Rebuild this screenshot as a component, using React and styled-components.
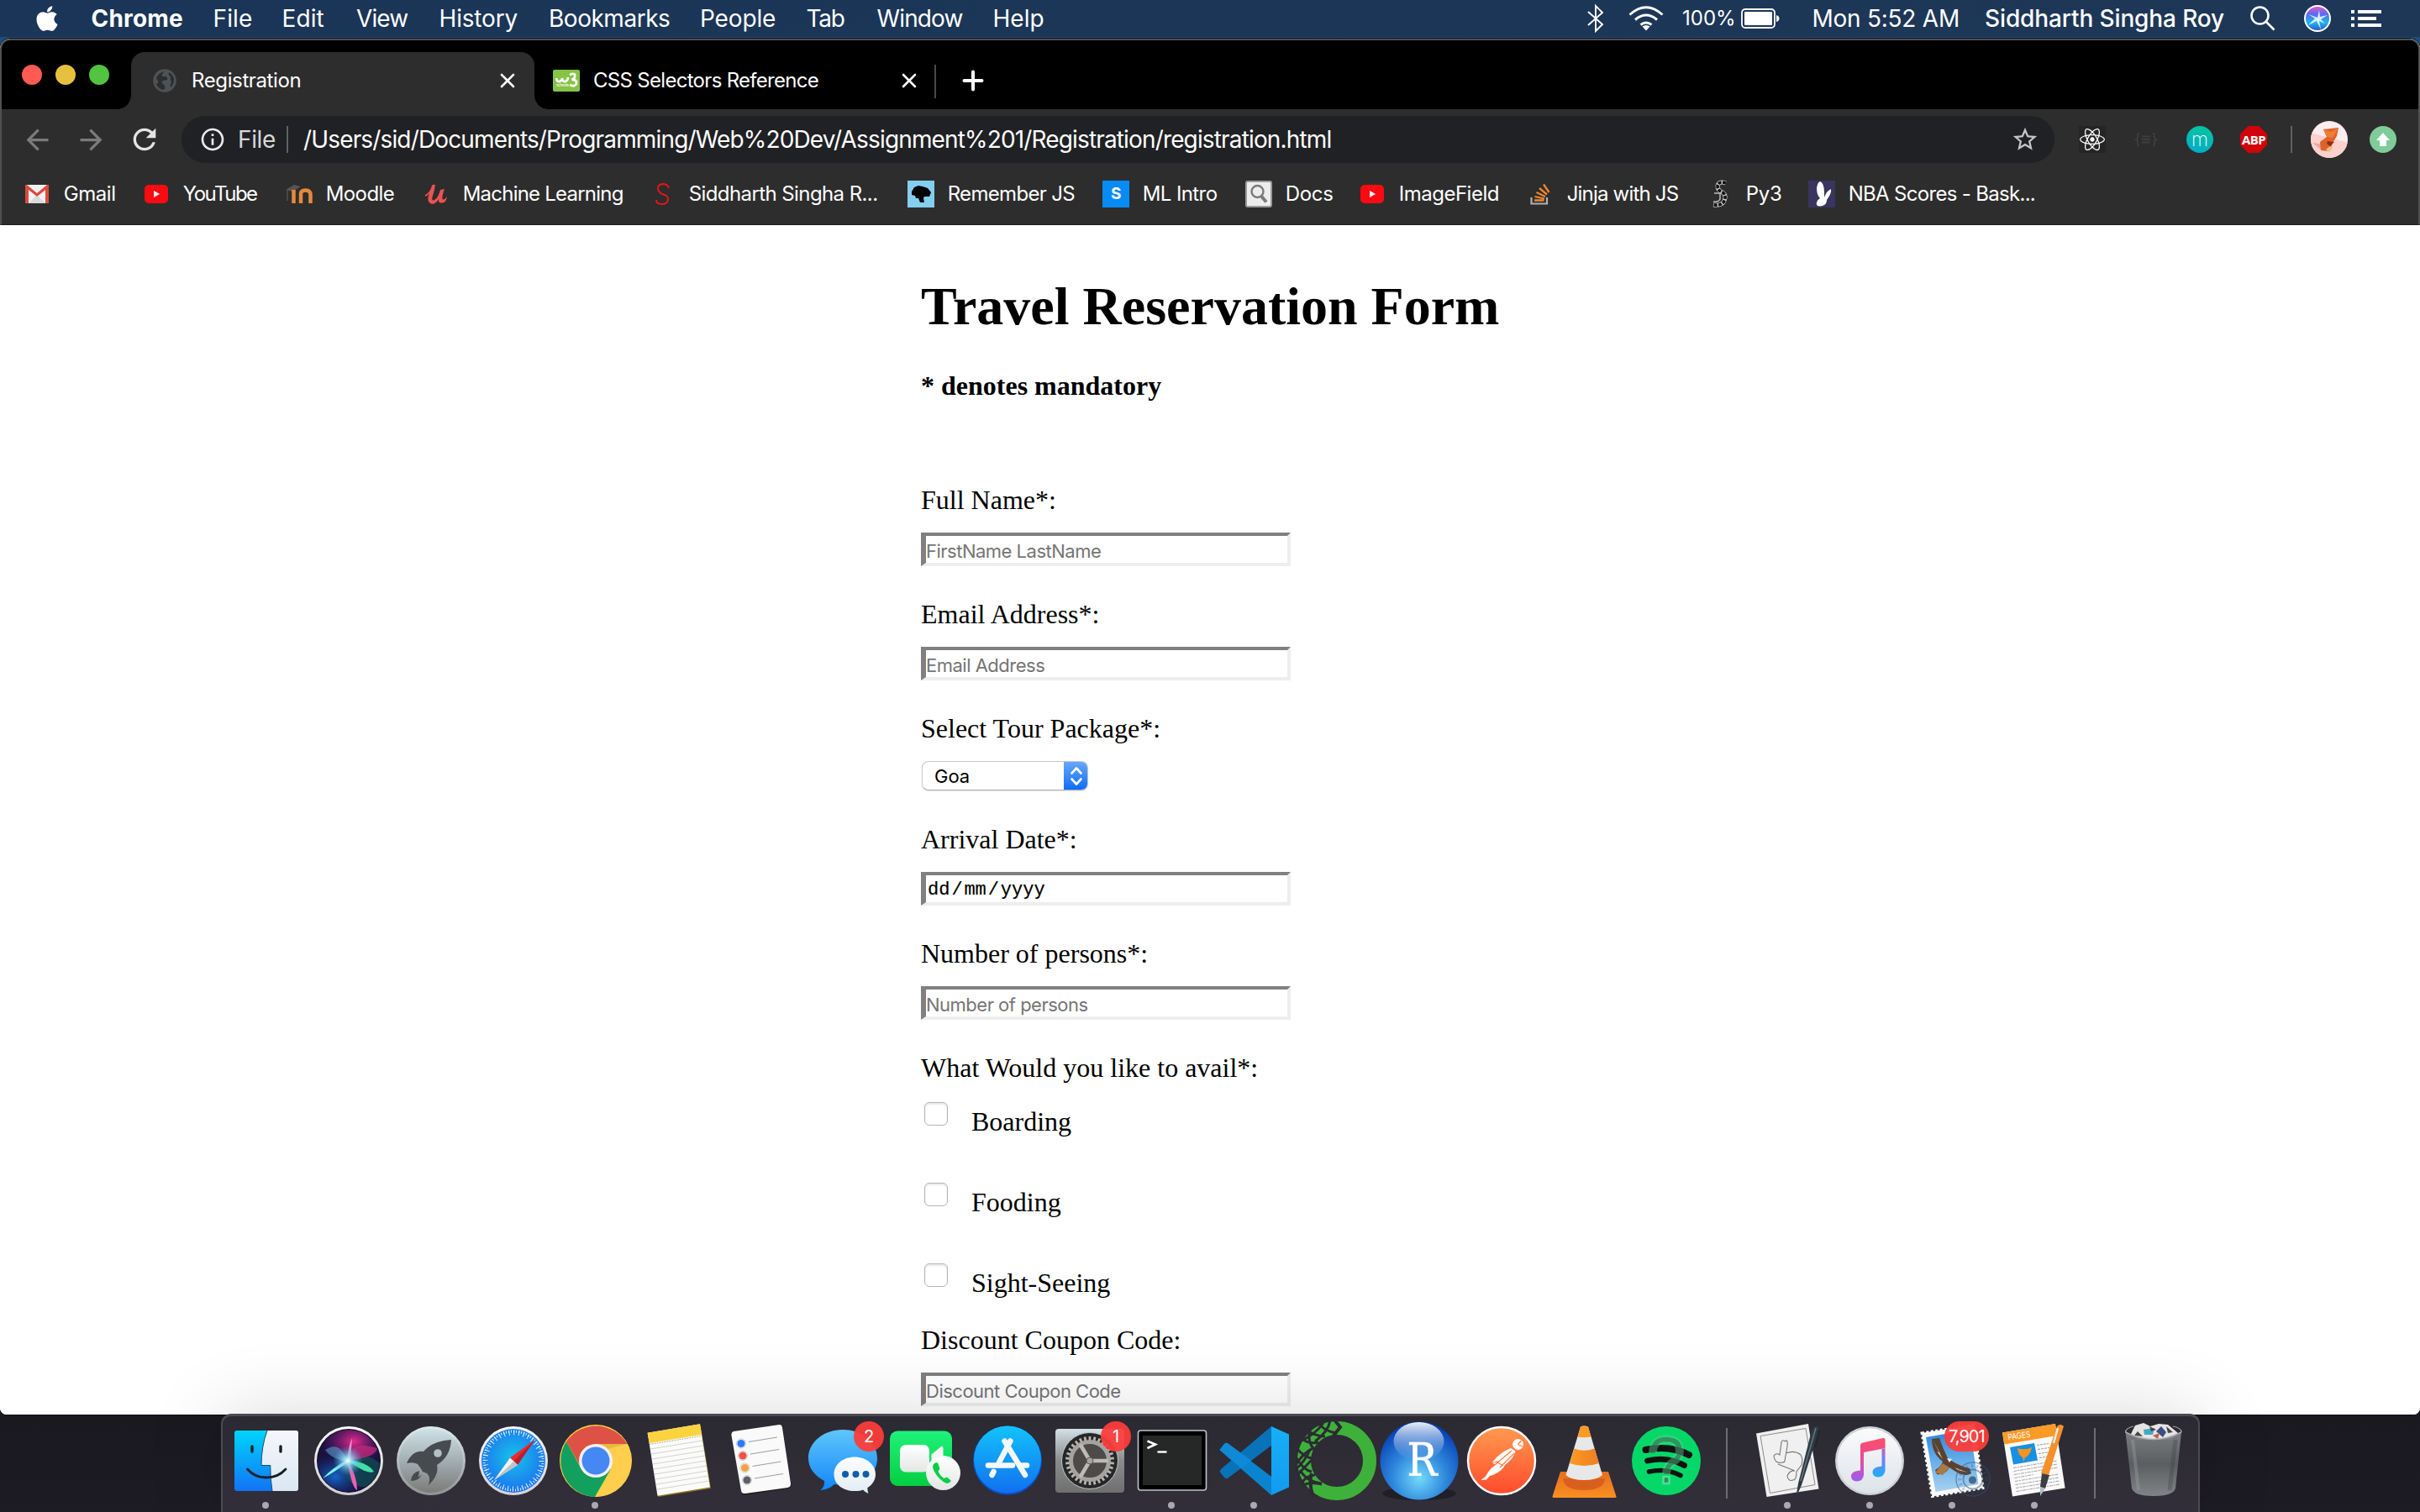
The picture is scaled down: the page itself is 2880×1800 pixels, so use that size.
import React from "react";
import styled, { createGlobalStyle } from "styled-components";
import { FaApple, FaReact } from "react-icons/fa";
import { MdArrowBack, MdArrowForward, MdRefresh, MdStarBorder, MdInfoOutline } from "react-icons/md";

const ui = `Inter, "Liberation Sans", sans-serif`;
const serif = `"Liberation Serif", "Times New Roman", serif`;
const mono = `"Liberation Mono", "Courier New", monospace`;

const GlobalStyle = createGlobalStyle`
  *, *::before, *::after { box-sizing: border-box; }
  html, body { margin: 0; padding: 0; background: #16151b; }
  body { width: 2880px; height: 1800px; overflow: hidden; font-family: ${ui}; }
  svg { display: block; overflow: visible; flex: none; }
`;

const Desktop = styled.div`
  display: flex;
  flex-direction: column;
  width: 2880px;
  height: 1800px;
  overflow: hidden;
  background: linear-gradient(180deg, #1d4f88 0, #1d4f88 90px, #17161b 1600px, #1d1c25 1800px);
`;

/* ---------- system menu bar ---------- */

const MenuBar = styled.header`
  display: flex;
  flex: none;
  align-items: center;
  height: 45px;
  padding: 0 46px 0 39px;
  color: #fff;
  background: linear-gradient(90deg, #1a3557, #1e3757);
  border-bottom: 1px solid #24487a;
`;

const MenuItem = styled.span`
  flex: none;
  width: ${(p) => p.$width}px;
  font-size: ${(p) => p.$size || 28}px;
  font-weight: ${(p) => p.$weight || 400};
  line-height: 44px;
  letter-spacing: ${(p) => p.$track || 0}px;
  white-space: nowrap;
`;

const MenuGlyph = styled.span`
  display: flex;
  flex: none;
  align-items: center;
  width: ${(p) => p.$width}px;
  height: 44px;
`;

const MenuSpacer = styled.div`
  flex: 1;
`;

/* ---------- browser window ---------- */

const BrowserWindow = styled.main`
  display: flex;
  flex: none;
  flex-direction: column;
  height: 1638px;
  margin-top: 1px;
  overflow: hidden;
  border-radius: 12px 12px 8px 8px;
  background: #fff;
  box-shadow: 0 0 0 1px #0c0f16;
`;

const Chrome = styled.div`
  flex: none;
  height: 222px;
  background: #2d2d2d;
  border: 2px solid #505050;
  border-bottom: 1px solid #1c1a1b;
  border-radius: 12px 12px 0 0;
  overflow: hidden;
`;

const TabStrip = styled.div`
  display: flex;
  align-items: flex-end;
  height: 82px;
  background: #000;
`;

const TrafficLights = styled.div`
  display: flex;
  align-items: center;
  gap: 16px;
  width: 154px;
  height: 82px;
  padding-left: 24px;
`;

const Light = styled.span`
  width: 24px;
  height: 24px;
  border-radius: 50%;
  background: ${(p) => p.$color};
`;

const Tab = styled.div`
  position: relative;
  display: flex;
  align-items: center;
  width: ${(p) => p.$width}px;
  height: 68px;
  padding: ${(p) => p.$pad};
  color: #fff;
  background: ${(p) => (p.$active ? "#2d2d2d" : "transparent")};
  border-radius: 16px 16px 0 0;
  &::before,
  &::after {
    content: "";
    position: absolute;
    bottom: 0;
    width: 16px;
    height: 16px;
    display: ${(p) => (p.$active ? "block" : "none")};
  }
  &::before {
    left: -16px;
    background: radial-gradient(circle at 0 0, transparent 15.5px, #2d2d2d 16px);
  }
  &::after {
    right: -16px;
    background: radial-gradient(circle at 100% 0, transparent 15.5px, #2d2d2d 16px);
  }
`;

const TabTitle = styled.span`
  flex: 1;
  margin-left: ${(p) => p.$gap}px;
  font-size: 24px;
  line-height: 30px;
  letter-spacing: ${(p) => p.$track}px;
  white-space: nowrap;
`;

const TabDivider = styled.span`
  width: 2px;
  height: 40px;
  margin: 0 32px 13px 0;
  background: #4a4a4a;
`;

const NewTab = styled.div`
  display: flex;
  align-items: center;
  height: 68px;
`;

const Toolbar = styled.div`
  display: flex;
  align-items: center;
  height: 72px;
  padding-left: 10px;
`;

const NavButton = styled.span`
  display: flex;
  align-items: center;
  justify-content: center;
  width: 64px;
  height: 40px;
  color: ${(p) => (p.$dim ? "#7b7b7b" : "#e4e4e4")};
`;

const Omnibox = styled.div`
  display: flex;
  align-items: center;
  width: 2229px;
  height: 56px;
  margin: 0 29px 0 12px;
  padding: 0 18px 0 21px;
  border-radius: 28px;
  background: #202124;
  color: #e8eaed;
`;

const OmniText = styled.span`
  flex: ${(p) => (p.$grow ? 1 : "none")};
  width: ${(p) => (p.$grow ? "auto" : p.$width + "px")};
  margin-left: ${(p) => p.$gap}px;
  font-size: 28px;
  line-height: 56px;
  color: ${(p) => (p.$grow ? "#fff" : "#d6d8db")};
  letter-spacing: ${(p) => p.$track}px;
  white-space: nowrap;
`;

const Rule = styled.span`
  flex: none;
  width: 2px;
  height: 32px;
  background: #5f6163;
  margin: ${(p) => p.$margin || 0};
`;

const Extensions = styled.div`
  display: flex;
  align-items: center;
  gap: 32px;
`;

const ExtBadge = styled.span`
  display: flex;
  align-items: center;
  justify-content: center;
  width: 32px;
  height: 32px;
  color: #fff;
  background: ${(p) => p.$bg};
  border-radius: ${(p) => p.$radius || 0};
  clip-path: ${(p) => p.$clip || "none"};
  font: ${(p) => p.$font || `400 16px ${ui}`};
  letter-spacing: ${(p) => p.$track || 0}px;
`;

const UpdateBadge = styled(ExtBadge)`
  margin-left: 26px;
`;

const BookmarksBar = styled.nav`
  display: flex;
  align-items: center;
  height: 57px;
  padding-left: 26px;
`;

const Bookmark = styled.a`
  display: flex;
  flex: none;
  align-items: center;
  gap: 15.7px;
  width: ${(p) => p.$width}px;
  color: #fff;
  font-size: 24px;
  line-height: 32px;
  letter-spacing: ${(p) => p.$track}px;
  white-space: nowrap;
`;

const IconTile = styled.span`
  display: flex;
  flex: none;
  align-items: center;
  justify-content: center;
  width: 32px;
  height: 32px;
  background: ${(p) => p.$bg || "transparent"};
  color: #fff;
  font: 700 19px ${ui};
`;

/* ---------- page ---------- */

const Page = styled.section`
  flex: 1;
  padding: 60px 0 0 1096px;
  font-family: ${serif};
  font-size: 32px;
  line-height: 36px;
  color: #000;
  background: #fff;
`;

const Title = styled.h1`
  margin: 0 0 39px;
  font-size: 64px;
  line-height: 74px;
`;

const Note = styled.h4`
  margin: 0 0 100px;
  font-size: 32px;
  line-height: 36px;
`;

const Field = styled.div`
  display: flex;
  flex-direction: column;
  align-items: flex-start;
  height: ${(p) => p.$height || 136}px;
`;

const DiscountField = styled.div`
  padding-top: 23px;
`;

const Label = styled.label`
  display: block;
  margin-bottom: 21px;
`;

const insetBox = `
  width: 440px;
  height: 40px;
  margin: 0;
  border-style: solid;
  border-width: 4px 4px 4px 6px;
  border-color: #808080 #eeeeee #eeeeee #808080;
  border-radius: 0;
  background: transparent;
`;

const TextInput = styled.input`
  ${insetBox}
  padding: 4px 0 0;
  outline: none;
  font: 400 22px ${ui};
  letter-spacing: -0.5px;
  text-indent: 0;
  &::placeholder { color: #757575; opacity: 1; }
`;

const DateInput = styled.div`
  ${insetBox}
  display: flex;
  align-items: center;
  padding: 3px 0 0;
  font: 400 22px/30px ${mono};
  -webkit-text-stroke: 0.2px #000;
`;

const DatePart = styled.span`
  padding: 0 2px;
`;

const DateSlash = styled.span`
  width: 13px;
`;

const Select = styled.div`
  display: flex;
  align-items: stretch;
  justify-content: space-between;
  width: 198px;
  height: 35px;
  margin-left: 1px;
  overflow: hidden;
  border: 1px solid #c9c9c9;
  border-bottom-color: #b0b0b0;
  border-radius: 8px;
  background: #fff;
  box-shadow: 0 1px 1px rgba(0, 0, 0, 0.12);
`;

const SelectValue = styled.span`
  padding: 1px 0 0 14px;
  font: 400 22px/33px ${ui};
`;

const SelectArrows = styled.span`
  display: flex;
  align-items: center;
  justify-content: center;
  width: 29px;
  margin: -1px -1px -1px 0;
  background: linear-gradient(180deg, #6aa9fb, #3b8bfb 50%, #0a6afe);
`;

const CheckRow = styled.label`
  display: flex;
  align-items: flex-start;
  height: 96px;
`;

const CheckList = styled.div`
  height: 265px;
  margin-top: -21px;
  padding: 23px 0 0 4px;
`;

const CheckBox = styled.span`
  width: 28px;
  height: 28px;
  border: 1px solid #b4b4b4;
  border-radius: 6px;
  background: #fff;
  box-shadow: inset 0 2px 2px rgba(0, 0, 0, 0.09);
`;

const CheckText = styled.span`
  margin: 5px 0 0 28px;
`;

/* ---------- dock ---------- */

const DockArea = styled.footer`
  display: flex;
  flex: 1;
  justify-content: flex-start;
  padding-left: 263px;
  margin-top: -1px;
`;

const Dock = styled.div`
  position: relative;
  display: flex;
  width: 2355px;
  height: 117px;
  padding: 4px 2px 0;
  border: 2px solid #4b4a53;
  border-top-width: 3px;
  border-bottom: 0;
  border-radius: 12px 12px 0 0;
  background: linear-gradient(180deg, #2b2932, #322f3a);
  box-shadow: 0 0 90px rgba(0, 0, 0, 0.15);
`;

const DockSlot = styled.div`
  position: relative;
  flex: none;
  width: 98px;
`;

const RunningDot = styled.span`
  display: block;
  width: 8px;
  height: 8px;
  margin: 2px auto 0;
  border-radius: 50%;
  background: #aba7b4;
`;

const DockBadge = styled.span`
  position: absolute;
  top: 2px;
  left: ${(p) => p.$left}px;
  min-width: 36px;
  height: 36px;
  padding: 0 5px;
  border-radius: 18px;
  background: rgba(252, 61, 57, 0.94);
  color: #fff;
  font: 400 20px/36px ${ui};
  letter-spacing: ${(p) => p.$track || 0}px;
  text-align: center;
`;

const DockDivider = styled.span`
  flex: none;
  width: 2px;
  height: 84px;
  margin: 10px ${(p) => p.$right}px 0 ${(p) => p.$left}px;
  background: #6d6b74;
`;

const Pic = ({ children }) => (
  <svg width="98" height="96" viewBox="0 0 98 96">{children}</svg>
);

const Grad = ({ id, stops, h }) => (
  <linearGradient id={id} x1="0" y1="0" x2={h ? 1 : 0} y2={h ? 0 : 1}>
    {stops.map((c, i) => (
      <stop key={i} offset={i / (stops.length - 1)} stopColor={c} />
    ))}
  </linearGradient>
);

const Finder = () => (
  <Pic>
    <Grad id="fi1" stops={["#00d5fd", "#1273f5"]} />
    <Grad id="fi2" stops={["#f6f7fa", "#dae7f3"]} />
    <rect x="12" y="13" width="76" height="72" rx="3" fill="url(#fi1)" />
    <path d="M51 13H85q3 0 3 3V82q0 3-3 3H57Q54.500 70 54.800 54.500H44Q44 32 51 13Z" fill="url(#fi2)" />
    <path d="M51 13Q44 32 44 54.500H54.800Q54.500 70 57 85" fill="none" stroke="#1a4a78" strokeWidth="1" />
    <path d="M33 32V38M67 32V38" stroke="#10202c" strokeWidth="3.400" strokeLinecap="round" />
    <path d="M27.500 59Q36 69 50 69T73 59" fill="none" stroke="#10202c" strokeWidth="2.800" strokeLinecap="round" />
  </Pic>
);

const Siri = () => (
  <Pic>
    <defs>
      <radialGradient id="si1" cx=".5" cy=".5" r=".5">
        <stop offset="0" stopColor="#fff" /><stop offset=".25" stopColor="#9fe4f7" stopOpacity=".9" />
        <stop offset="1" stopColor="#3aa5e0" stopOpacity="0" />
      </radialGradient>
      <radialGradient id="si2" cx=".5" cy=".5" r=".5">
        <stop offset="0" stopColor="#e62a8e" /><stop offset="1" stopColor="#7a1a78" stopOpacity="0" />
      </radialGradient>
      <radialGradient id="si3" cx=".5" cy=".5" r=".5">
        <stop offset="0" stopColor="#1467c8" /><stop offset="1" stopColor="#0d3d8c" stopOpacity="0" />
      </radialGradient>
      <clipPath id="siC"><circle cx="50" cy="49" r="37" /></clipPath>
    </defs>
    <Grad id="si0" stops={["#fafafa", "#cfcfd2"]} />
    <circle cx="50" cy="49" r="41" fill="url(#si0)" />
    <circle cx="50" cy="49" r="38" fill="#0b0a24" />
    <g clipPath="url(#siC)">
      <rect x="10" y="10" width="82" height="80" fill="#1b1242" />
      <ellipse cx="56" cy="26" rx="38" ry="28" fill="url(#si2)" />
      <ellipse cx="34" cy="68" rx="34" ry="26" fill="url(#si3)" />
      <ellipse cx="68" cy="62" rx="22" ry="18" fill="#0c5a55" opacity=".6" />
      <path d="M48 48Q52 24 84 34Q82 46 48 48Z" fill="#c22a7c" opacity=".75" />
      <path d="M48 48Q30 58 19 70Q34 62 50 50Z" fill="#7ff0f5" />
      <path d="M48 48Q72 50 80 62Q72 66 48 48Z" fill="#3fe0a8" />
      <path d="M48 48Q60 66 60 84Q54 82 48 48Z" fill="#f05fb4" />
      <path d="M48 50Q40 24 22 36Q28 46 48 50Z" fill="#58b8e8" opacity=".5" />
      <path d="M48 48Q50 30 54 22L52 50Z" fill="#f59ad0" opacity=".9" />
      <circle cx="49" cy="49" r="18" fill="url(#si1)" />
    </g>
  </Pic>
);

const Launchpad = () => (
  <Pic>
    <Grad id="la1" stops={["#cfe0e8", "#a3aeb2", "#7c7b79"]} />
    <Grad id="la2" stops={["#dbeaf1", "#8f9394"]} />
    <circle cx="50" cy="49" r="41" fill="url(#la2)" />
    <circle cx="50" cy="49" r="38" fill="url(#la1)" />
    <path d="M74 24Q52 25 41 38Q28 36 21 52Q29 50 34 53L37 57L40 62L45 64Q50 68 47 78Q60 66 57 54Q73 44 74 24Z" fill="#454b4e" />
    <circle cx="58" cy="40" r="4.800" fill="#b4c0c6" />
    <path d="M36 61Q27 63 26 73Q36 73 39 65L35 69Z" fill="#454b4e" />
  </Pic>
);

const Safari = () => (
  <Pic>
    <Grad id="sa1" stops={["#f7f7f7", "#d4d4d6"]} />
    <radialGradient id="sa2" cx=".5" cy=".45" r=".55">
      <stop offset="0" stopColor="#17c3ea" /><stop offset="1" stopColor="#1c72f0" />
    </radialGradient>
    <circle cx="50" cy="49" r="41" fill="url(#sa1)" />
    <circle cx="50" cy="49" r="38" fill="url(#sa2)" />
    <circle cx="50" cy="49" r="33.500" fill="none" stroke="#dff3ff" strokeWidth="6" strokeDasharray="1 4.850" />
    <circle cx="50" cy="49" r="35" fill="none" stroke="#dff3ff" strokeWidth="3" strokeDasharray="1 2.050" />
    <path d="M75.500 24L46 45.500L55 54Z" fill="#ec2a2e" />
    <path d="M75.500 24L50.500 49.500L55 54Z" fill="#b81f2c" />
    <path d="M27 72L46 45.500L55 54Z" fill="#f4f4f4" />
    <path d="M27 72L50.500 49.500L55 54Z" fill="#bfc3c8" />
  </Pic>
);

const ChromeIcon = () => (
  <Pic>
    <circle cx="50" cy="49" r="43" fill="#ffcd46" />
    <path d="M50 49L15 26A43 43 0 0 1 87.500 29H50Z" fill="#de5246" />
    <path d="M15 26A43 43 0 0 0 49 92L68 59L50 49L33 59Z" fill="#11a05e" />
    <path d="M50 29H87.500A43 43 0 0 1 49.500 92L68 59Z" fill="#ffce4c" />
    <path d="M15 26L33 58L42 36Z" fill="#de5246" />
    <path d="M50 29H87.500L60 36Z" fill="#e9b83c" />
    <circle cx="50" cy="49" r="20" fill="#f1f1f1" />
    <circle cx="50" cy="49" r="16.500" fill="#4587f3" />
  </Pic>
);

const Notes = () => (
  <Pic>
    <path d="M14.500 18L77 9L89 82L26.500 92Z" fill="#8f7220" />
    <path d="M13.600 15.700L76 5.300L88 80.500L25.500 90.700Z" fill="#fbfbf9" />
    <path d="M13.600 15.700L76 5.300L78 18L16 28Z" fill="#fbd33f" />
    {[0, 1, 2, 3, 4, 5, 6, 7, 8].map((i) => (
      <path key={i} d={`M${17 + i * 1} ${35 + i * 6}L${79 + i * 1} ${25 + i * 6}`} stroke="#d3d3d0" strokeWidth="1" />
    ))}
    <path d="M16 29.500L78 19.500" stroke="#9b9b96" strokeWidth="1" strokeDasharray="1.500 1.500" />
  </Pic>
);

const Reminders = () => (
  <Pic>
    <path d="M19 15L72 6.500Q76 6 76.500 10L86.500 77Q87 81 83 82L33 89.500Q28 90 27.500 86Z" fill="#111" opacity=".7" />
    <path d="M18 14L71 6.200Q75.500 5.600 76 9.500L86 76Q86.500 80 82.500 81L32 88Q27.500 88.500 27 84.500L15.500 19Q15 15 18 14Z" fill="#fafafa" />
    {[["#2f7bf6", 27, 28.500], ["#f0534a", 29, 43], ["#f2a147", 31.500, 57.500], ["#5d6169", 34, 72]].map(([c, x, y]) => (
      <g key={c}>
        <circle cx={x} cy={y} r="5.600" fill="none" stroke="#cfcfcf" />
        <circle cx={x} cy={y} r="4.600" fill={c} />
        <path d={`M${x + 9} ${y - 2}L${x + 43} ${y - 7.500}`} stroke="#9d9d9d" strokeWidth="1" />
      </g>
    ))}
  </Pic>
);

const Messages = () => (
  <Pic>
    <Grad id="me1" stops={["#5fc6fb", "#1286fb"]} />
    <Grad id="me2" stops={["#fdfeff", "#e1ecf6"]} />
    <path d="M50 12C27 12 9 27 9 46C9 58 17 67 28 73Q29 79 23.500 84Q34 83 40 77C72 82 91 66 91 46C91 27 73 12 50 12Z" fill="url(#me1)" />
    <path d="M64 44.500C50 44.500 39.500 53.500 39.500 65C39.500 77 50 85 64 85Q71 85 74 83.500Q77 87 80.500 88Q79 84 79.500 81C86 77 89 71 89 65C89 53.500 78 44.500 64 44.500Z" fill="url(#me2)" />
    <g fill="#0f5ea8"><circle cx="53" cy="65" r="4" /><circle cx="65.500" cy="65" r="4" /><circle cx="77.500" cy="65" r="4" /></g>
  </Pic>
);

const phonePath = "M62 51.500C59 53 58 56 61 62C65 69 71 74.500 76 76Q79 76 81 73L76 68.500L72.500 70Q67 66 65.500 61.500L67.500 58.500L65 51.500Q64 51 62 51.500Z";

const FaceTime = () => (
  <Pic>
    <Grad id="fa1" stops={["#1ff27a", "#05ce42"]} />
    <Grad id="fa2" stops={["#ffffff", "#e3e7e4"]} />
    <rect x="8" y="13.500" width="74" height="65.500" rx="9" fill="url(#fa1)" />
    <rect x="20" y="30" width="35" height="32.500" rx="7" fill="url(#fa2)" />
    <path d="M57.500 41.500L69 32Q71.500 31 71.500 34V58H57.500Z" fill="#f2f5f3" />
    <circle cx="71.500" cy="63.500" r="20.500" fill="url(#fa2)" />
    <path d={phonePath} fill="#06cf45" />
  </Pic>
);

const AppStore = () => (
  <Pic>
    <Grad id="ap1" stops={["#12c3fb", "#1170ef"]} />
    <circle cx="50" cy="48.500" r="41" fill="#0a4fd0" />
    <circle cx="50" cy="47.500" r="40" fill="url(#ap1)" />
    <g stroke="#f4f8fb" strokeWidth="6.500" strokeLinecap="round" fill="none">
      <path d="M53.500 25.500L40 51" /><path d="M46.500 25.500L71 66" /><path d="M27 54.500H56" /><path d="M66 54.500H73" /><path d="M33.500 62L31.500 66" />
    </g>
  </Pic>
);

const gearTeeth = Array.from({ length: 30 }, (_, i) => i * 12);

const Preferences = () => (
  <Pic>
    <Grad id="pr1" stops={["#d3e0e6", "#8a8b8b", "#6f6f6f"]} />
    <rect x="9" y="11" width="82" height="76" rx="4" fill="url(#pr1)" />
    <circle cx="50" cy="49" r="33.500" fill="#262729" stroke="#b9c8cf" strokeWidth="1" />
    {gearTeeth.map((a) => (
      <rect key={a} x="48.600" y="20" width="2.800" height="6" fill="#b7b5b2" transform={`rotate(${a} 50 49)`} />
    ))}
    <circle cx="50" cy="49" r="22.500" fill="#4c4b4a" stroke="#a5a29f" strokeWidth="5" />
    <path d="M50 49L38.500 29.500M50 49H72M50 49L38.500 68.500" stroke="#bdbab7" strokeWidth="4.500" />
    <circle cx="50" cy="49" r="4" fill="#a5a29f" stroke="#5b5957" />
  </Pic>
);

const Terminal = () => (
  <Pic>
    <rect x="9.500" y="13" width="81" height="71" rx="3" fill="#000" stroke="#bfc3cc" strokeWidth="1.600" />
    <rect x="15" y="19" width="70" height="59" fill="#262727" />
    <path d="M20.500 25.500L30 29.500L20.500 34" fill="none" stroke="#fff" strokeWidth="2.600" />
    <path d="M32.500 38.500H43.500" stroke="#fff" strokeWidth="2.400" />
  </Pic>
);

const VSCode = () => (
  <Pic>
    <Grad id="vs1" stops={["#17b0f5", "#129bf0"]} />
    <path d="M8.500 36L14 29Q16 27 18.500 28.500L70 68V90L10 37.500Z" fill="#0a84cf" />
    <path d="M8.500 62L14 69Q16 71 18.500 69.500L70 31V8L10 59Z" fill="#0873b8" />
    <path d="M70 8L91 17.500V80.500L70 90Z" fill="url(#vs1)" />
    <path d="M8.500 36L14 29Q16 27 18.500 28.500L46.500 49L34 58Z" fill="#1089d6" />
    <path d="M46.500 49L70 31V67Z" fill="#2c2933" />
  </Pic>
);

const Anaconda = () => (
  <Pic>
    <circle cx="50" cy="49" r="39" fill="none" stroke="#3eb13a" strokeWidth="16" />
    <g stroke="#2c2a33" strokeWidth="3" fill="none">
      <path d="M46 -1L54 9L46 19" strokeWidth="4" />
      <path d="M42 1Q40 14 24 26" /><path d="M26 2Q34 14 50 16" /><path d="M14 12Q24 20 36 20" /><path d="M34 4Q24 18 6 26" />
      <path d="M8 22Q16 30 28 27" /><path d="M17 16Q16 28 22 34Q12 38 2 52" /><path d="M2 34Q12 46 22 46" /><path d="M18 36Q12 50 0 60" />
      <path d="M2 46Q10 60 20 62" /><path d="M3 66Q12 56 20 48" /><path d="M6 60Q14 74 32 76" /><path d="M8 76Q14 66 24 66" /><path d="M20 64Q16 76 22 92" strokeWidth="4" /><path d="M8 78Q20 74 32 77" />
    </g>
  </Pic>
);

const RStudio = () => (
  <Pic>
    <defs>
      <radialGradient id="rs1" cx=".5" cy=".72" r=".68">
        <stop offset="0" stopColor="#74dafb" /><stop offset=".5" stopColor="#2f88dc" /><stop offset="1" stopColor="#0741b5" />
      </radialGradient>
    </defs>
    <Grad id="rs2" stops={["#ffffff", "rgba(120,160,225,.1)"]} />
    <ellipse cx="50" cy="88" rx="44" ry="8" fill="#15141a" opacity=".6" />
    <circle cx="50" cy="49" r="46.500" fill="url(#rs1)" />
    <ellipse cx="49.500" cy="26" rx="30" ry="23" fill="url(#rs2)" opacity=".92" />
    <text x="53.500" y="67" textAnchor="middle" fontFamily='"DejaVu Serif", serif' fontSize="54" textLength="36" lengthAdjust="spacingAndGlyphs" fill="#fff" stroke="#fff" strokeWidth=".6">R</text>
  </Pic>
);

const Postman = () => (
  <Pic>
    <Grad id="po1" stops={["#ff9a50", "#ff4a2c"]} />
    <circle cx="50" cy="49" r="40" fill="url(#po1)" stroke="#fff" strokeWidth="2.400" />
    <circle cx="69.500" cy="29.500" r="6.500" fill="#fff" />
    <path d="M69.500 29.500L73.500 25M69.500 29.500L75 32" stroke="#ff7a40" strokeWidth="1.200" />
    <path d="M61 34L66.500 37.500Q64 47 54 54Q50 63 36 67L32 71.500L25.500 72L31 67.500Q36 58 44 53.500L38.500 52Q46 40 61 34Z" fill="#fff" />
    <path d="M43 53L62 37M45 51L52 55M48 57L65 40M38 52L48 49" stroke="#ff7a40" strokeWidth="1.100" />
  </Pic>
);

const VLC = () => (
  <Pic>
    <Grad id="vl1" stops={["#e56f1e", "#f98f22"]} />
    <Grad id="vl2" stops={["#fb9a22", "#ee7f22"]} h />
    <path d="M22 62H79L88.500 91.500Q88.500 93 87 93H14Q12.500 93 12.500 91.500Z" fill="url(#vl1)" />
    <path d="M25 70Q26 84 50 84T75 70Z" fill="#d9601c" />
    <path d="M46 8.500Q50 6.500 55 8.500L72 66Q65 72 50 72T28.500 66Z" fill="#e7e8ea" />
    <path d="M46 8.500Q50 6.500 55 8.500L58.500 20.500Q50 22 42.500 20.500Z" fill="#fc9a22" />
    <path d="M38.500 34.500Q50 39 62.500 34.500L68 52Q50 58 33 52Z" fill="url(#vl2)" />
  </Pic>
);

const questionStem = "M34 40Q34 23.500 50 23.500Q66 24 66 37Q66 45 58.500 50Q50 56 50 64V65";

const Spotify = () => (
  <Pic>
    <circle cx="50" cy="49" r="41" fill="#05d868" />
    <g fill="none" stroke="#111" strokeLinecap="round">
      <path d="M25.500 36Q54 30 77 42" strokeWidth="8" /><path d="M27.500 49Q52 43.500 71.500 54.500" strokeWidth="6.800" /><path d="M29.500 62Q50 57.500 67 66.500" strokeWidth="5.600" />
    </g>
    <g fill="none">
      <path d={questionStem} stroke="#6fd39b" strokeWidth="10" opacity=".4" />
      <path d={questionStem} stroke="#2f6a50" strokeWidth="5.500" opacity=".6" />
      <rect x="46.500" y="68" width="7" height="8" fill="#2f8a5c" stroke="#4de08f" strokeWidth="2.500" />
    </g>
  </Pic>
);

const ScriptEditor = () => (
  <Pic>
    <path d="M12 16.500L74 5L86.500 82.500L24.500 92Z" fill="#f0f0f0" />
    <path d="M17 19.500L71 10.500L82 77.500L28.500 87.500Z" fill="none" stroke="#8c8c8c" strokeWidth="1" />
    <path d="M46 26Q50 22 49 32L46 49Q46 51 43 51Q34 53 33 43Q36 39 40 42L42 27Q44 23 46 26M47 40Q58 36 65 42Q68 46 66 54L60 62Q60 72 56 72Q50 74 49 67Q52 60 58 61L38 53" fill="none" stroke="#777" strokeWidth="1.100" />
    <path d="M78 13Q81 6 86 8L87 12L66 78L61 89L60 88L62 76Z" fill="#2e3a42" />
    <path d="M83 10L65 73" stroke="#65747d" strokeWidth="1.600" />
    <path d="M87 12L82 33" stroke="#20282d" strokeWidth="2" />
  </Pic>
);

const Music = () => (
  <Pic>
    <Grad id="mu0" stops={["#fbfbfc", "#dde3e8"]} />
    <Grad id="mu1" stops={["#fb4f64", "#ea4c9c", "#9a5cf5"]} />
    <Grad id="mu2" stops={["#fb4f64", "#7a7df2", "#1ab0f8"]} />
    <circle cx="49" cy="49" r="41" fill="#cdd2d8" />
    <circle cx="49" cy="49" r="38.500" fill="url(#mu0)" />
    <path d="M38 31Q38 28 41 27.500L65 22Q67.500 21.500 67.500 24V34L42 39V66Q41 73.500 33.500 73.500Q27 73 27 67.500Q27 61 38 60.500Z" fill="url(#mu1)" />
    <path d="M67.500 23V61Q66 68.500 59 68.500Q52.500 68 52.500 62.500Q53 56 63.500 55.500V35L67.500 34Z" fill="url(#mu2)" />
  </Pic>
);

const Mail = () => (
  <Pic>
    <Grad id="ma1" stops={["#2c82d8", "#66aee8", "#a8d2f0"]} />
    <path d="M13 16L75 6L86 81.500L25.500 91.500Z" fill="#fbfbfb" stroke="#fbfbfb" strokeWidth="3" strokeDasharray="3 2.500" />
    <path d="M18 21L70.500 12L80.500 77L29.500 86Z" fill="url(#ma1)" />
    <path d="M25 23L34 22Q38 34 44 46L50 50Q58 55 70 58L72 64Q64 69 52 61L46 57Q40 67 31 65L29 60Q36 56 38 50Q25 40 25 23Z" fill="#5a4231" />
    <path d="M26 24L35 40L31 38L38 47Z" fill="#e2d6c2" />
    <path d="M52 57L68 63L56 60L66 67Z" fill="#dccbb0" />
    <path d="M38 52L46 57L38 66L29 63Z" fill="#a97a45" />
    <path d="M43 46L49 47L46 51Z" fill="#f3efe6" />
    <g fill="none" stroke="#33557a" opacity=".5"><circle cx="74" cy="71" r="20" strokeWidth="1.400" /><circle cx="74" cy="71" r="11.500" strokeWidth="1.800" /></g>
    <circle cx="74" cy="71" r="15.800" fill="none" stroke="#33557a" strokeWidth="4" strokeDasharray="2 4" opacity=".3" />
    <circle cx="73.500" cy="72" r="4.600" fill="#2d4c6e" opacity=".75" />
  </Pic>
);

const Pages = () => (
  <Pic>
    <path d="M11 15.500L74 5L85.600 81.500L23 91.500Z" fill="#fafafa" />
    <path d="M11 15.500L74 5L76 19L13.500 29.500Z" fill="#fb9a25" />
    <text x="18" y="24.500" fontFamily={ui} fontSize="10" textLength="27" lengthAdjust="spacingAndGlyphs" fill="#fff" transform="rotate(-8 18 24.500)">PAGES</text>
    <path d="M20 33L49 28L53 48.500L24 53.500Z" fill="#1890e2" />
    <path d="M29 34Q38 37 46 33Q44 43 38 45L36.500 50L35 45Q30 42 29 34Z" fill="#f5941f" />
    {[0, 1, 2, 3].map((i) => (
      <path key={i} d={`M${52 + i} ${30.500 + i * 5}L${66 + i} ${28.500 + i * 5}`} stroke="#9c9c9c" strokeWidth="1" strokeDasharray="3 1" />
    ))}
    {[0, 1, 2, 3, 4, 5, 6, 7].map((i) => (
      <path key={i} d={`M${24 + i * 0.5} ${57.500 + i * 4}L${(i === 3 ? 46 : 76) + i * 0.5} ${(i === 3 ? 53.500 : 49) + i * 4}`} stroke="#a5a5a5" strokeWidth="1" strokeDasharray="4 1 2 1" />
    ))}
    <path d="M76 8Q80 4 84 8L66 66L57 64Z" fill="#f4902a" />
    <path d="M77 10L72 28" stroke="#e9eaec" strokeWidth="2.500" />
    <path d="M58 64L67 66L62 82L56 80Z" fill="#3e3e42" />
    <path d="M56 80L62 82L56 91Z" fill="#a9c0cc" />
  </Pic>
);

const Trash = () => (
  <Pic>
    <Grad id="tr1" stops={["#7d8184", "#5d6163", "#85898b"]} />
    <path d="M22 17L27 7L37 4L45 8L55 5L66 6L78 16L70 24H30Z" fill="#e6e4e3" />
    <path d="M37 12L50 10L48 18L38 18Z" fill="#3fa9c8" />
    <path d="M52 14L58 8L64 15L60 21Z" fill="#3d4d86" />
    <path d="M30 14L36 20L26 19ZM64 8L72 15L66 16ZM44 8L52 12L46 14Z" fill="#494543" />
    <path d="M48 19L56 16L54 23Z" fill="#c0603f" />
    <path d="M15.500 15Q49 32 82 15L75 82Q72 91 49 91T23 82Z" fill="url(#tr1)" opacity=".95" />
    <path d="M15.500 15Q49 32 82 15" fill="none" stroke="#a9adb0" strokeWidth="1.500" />
    <path d="M15.500 15Q16 10 25 8M82 15Q82 10 72 8" fill="none" stroke="#a9adb0" strokeWidth="1.200" />
    <path d="M24 24L31 84" stroke="#a2a6a8" strokeWidth="4" opacity=".35" />
    <path d="M75 24L68 84" stroke="#333" strokeWidth="5" opacity=".25" />
  </Pic>
);

/* ---------- small glyphs ---------- */

const Bluetooth = () => (
  <svg width="20" height="34" viewBox="0 0 20 34"><path d="M1 9L18 24L10 32V2L18 10L1 25" fill="none" stroke="#fff" strokeWidth="1.900" /></svg>
);

const Wifi = () => (
  <svg width="42" height="30" viewBox="0 0 42 30" fill="none" stroke="#fff" strokeWidth="3">
    <path d="M1.500 10.500Q21 -7 40.500 10.500" /><path d="M8 16.500Q21 5.500 34 16.500" /><path d="M14.500 22.500Q21 17.500 27.500 22.500" />
    <path d="M16.500 24.500Q21 21.500 25.500 24.500L21 29.500Z" fill="#fff" stroke="none" />
  </svg>
);

const Battery = () => (
  <svg width="46" height="24" viewBox="0 0 46 24">
    <rect x="1" y="1" width="39" height="22" rx="4" fill="none" stroke="#fff" strokeWidth="1.800" />
    <rect x="4" y="4" width="33" height="16" rx="1" fill="#fff" /><path d="M42 8Q45.500 9 45.500 12T42 16Z" fill="#fff" />
  </svg>
);

const Search = () => (
  <svg width="30" height="30" viewBox="0 0 30 30" fill="none" stroke="#fff" strokeWidth="2.600"><circle cx="11.500" cy="11.500" r="10" /><path d="M18.500 18.500L28.500 28.500" /></svg>
);

const SiriSmall = () => (
  <svg width="32" height="32" viewBox="0 0 32 32">
    <Grad id="ss1" stops={["#e65ad0", "#5a6bf0", "#1ab8e8", "#3a49c8"]} />
    <circle cx="16" cy="16" r="15" fill="url(#ss1)" stroke="#fff" strokeWidth="2" />
    <path d="M16 15L18 6L19 14L28 12L20 17L25 22L18 19L20 29L15 19L5 24L13 16L5 11Z" fill="#eafcff" opacity=".9" />
  </svg>
);

const ListGlyph = () => (
  <svg width="36" height="20" viewBox="0 0 36 20" stroke="#fff" strokeWidth="3.800"><path d="M0 2H4M8 2H36M0 10H4M8 10H30M0 18H4M8 18H36" /></svg>
);

const Globe = () => (
  <svg width="28" height="28" viewBox="0 0 28 28">
    <circle cx="14" cy="14" r="13.800" fill="#4d5257" />
    <path d="M14 3Q10 6 11 9L15 9Q18 10 17 13L12 14Q9 16 12 18L14 20Q15 23 13 25Q6 24 3.500 17Q5 18 6 17L6 14L4 11Q7 4 14 3ZM19 4Q24 7 25 12Q25 19 21 22Q20 18 22 16Q20 12 21 9Q18 8 19 4Z" fill="#2d2d2d" />
  </svg>
);

const W3 = () => (
  <svg width="32" height="26" viewBox="0 0 32 26">
    <rect width="32" height="26" rx="2" fill="#85c446" />
    <path d="M4 10Q5 15 8 14Q11 13 11 10Q12 15 15 14Q18 13 18 9" fill="none" stroke="#fff" strokeWidth="2.600" />
    <path d="M20 6Q27 3 26 8Q26 11 22.500 11.500Q29 12 28 16.500Q26 21 20 18" fill="none" stroke="#fff" strokeWidth="2.800" />
    <text x="4" y="20" fontFamily={ui} fontSize="5" fill="#fff" textLength="15">schools</text>
  </svg>
);

const Close = () => (
  <svg width="18" height="18" viewBox="0 0 18 18"><path d="M2 2L16 16M16 2L2 16" stroke="#fff" strokeWidth="2.600" strokeLinecap="round" /></svg>
);

const Plus = () => (
  <svg width="24" height="24" viewBox="0 0 24 24"><path d="M12 1.500V22.500M1.500 12H22.500" stroke="#fff" strokeWidth="4" strokeLinecap="round" /></svg>
);

const Gmail = () => (
  <svg width="28" height="22" viewBox="0 0 28 22">
    <rect width="28" height="22" rx="2" fill="#f2f2f2" /><path d="M4 22L14 12L24 22Z" fill="#d9d9d9" />
    <path d="M0 2Q0 0 2 0L14 10L26 0Q28 0 28 2V20Q28 22 26 22H24V6L14 14L4 6V22H2Q0 22 0 20Z" fill="#dc4a3d" />
  </svg>
);

const YouTube = () => (
  <svg width="28" height="22" viewBox="0 0 28 22"><rect width="28" height="22" rx="5" fill="#fb0a11" /><path d="M11 7L18 11L11 15Z" fill="#fff" /></svg>
);

const Moodle = () => (
  <svg width="32" height="24" viewBox="0 0 32 24">
    <path d="M0 7L10 1L18 3L8 9Z" fill="#5c5351" /><path d="M2 8V20" stroke="#55504d" strokeWidth="1.500" />
    <path d="M9.500 23V7M18 23V12Q18 7.500 23.500 7.500Q29.500 7.500 29.500 13V23" fill="none" stroke="#e58a3a" strokeWidth="4.500" />
  </svg>
);

const Udemy = () => (
  <svg width="28" height="24" viewBox="0 0 28 24">
    <path d="M1 13Q7 10 9 2Q10 0 13 1Q12 8 10 14Q8 20 11 19.500Q16 18 19 7L24 6Q20 17 22 18.500Q24 19 27 15Q26 22.500 21 22.500Q16 22.500 17 18Q13 25 8 23.500Q2 21 6 11Q4 14 1 15Z" fill="#ec5252" />
  </svg>
);

const RedS = () => (
  <svg width="17" height="26" viewBox="0 0 17 26"><path d="M16 6Q15 1 8.500 1Q2 2 3 7Q4 11 8 13Q16 15 15 20Q14 25 8 25Q1 25 1 20" fill="none" stroke="#e8131d" strokeWidth="1.900" /></svg>
);

const Tree = () => (
  <svg width="24" height="22" viewBox="0 0 24 22"><path d="M1 8L4 3L9 1L14 2L20 4L24 9L22 14L16 14L15 16L16 21H11L9 16L6 16L5 13L1 12Z" fill="#050505" /></svg>
);

const DocSearch = () => (
  <svg width="32" height="32" viewBox="0 0 32 32">
    <rect x="1" y="1" width="30" height="30" rx="2" fill="#ededed" stroke="#9b9b9b" strokeWidth="2" />
    <circle cx="14.500" cy="13" r="7" fill="none" stroke="#7b7b7b" strokeWidth="2.400" /><path d="M19 18.500L25 25.500" stroke="#7b7b7b" strokeWidth="4" />
  </svg>
);

const StackOverflow = () => (
  <svg width="24" height="26" viewBox="0 0 24 26" fill="none">
    <path d="M1.500 17V24.500H20V17" stroke="#b0b2b4" strokeWidth="2.200" />
    <path d="M5 20.500H16.500M5.500 16L17 18.500M7.500 11L18 16M11 6L20 13.500M16 1.500L22.500 11" stroke="#f0852f" strokeWidth="2.300" />
  </svg>
);

const Snake = () => (
  <svg width="22" height="32" viewBox="0 0 22 32" fill="none">
    <path d="M19 3Q11 0 9 6Q9 12 15 14Q20 18 17 24Q15 30 4 29" stroke="#c9c9c9" strokeWidth="5" />
    <path d="M19 3Q11 0 9 6Q9 12 15 14Q20 18 17 24Q15 30 4 29" stroke="#111" strokeWidth="3.600" strokeDasharray="4 1.500" />
    <path d="M5 15H12V22Q10 26 4 25" stroke="#bdbdbd" strokeWidth="1.500" />
  </svg>
);

const Rabbit = () => (
  <svg width="24" height="30" viewBox="0 0 24 30"><path d="M10 0Q15 2 15 13V19Q18 11 23 9Q24 14 18 22Q18 26 15 28Q9 31 6 28Q5 23 10 20Q6 16 6 8Q7 1 10 0Z" fill="#fff" /></svg>
);

const Fox = () => (
  <svg width="44" height="44" viewBox="0 0 44 44">
    <clipPath id="fox"><circle cx="22" cy="22" r="22" /></clipPath>
    <g clipPath="url(#fox)">
      <rect width="44" height="44" fill="#fdecef" /><path d="M0 14L44 26V44H0Z" fill="#fdcfcd" /><path d="M2 26L16 28L12 34Z" fill="#e9aaa6" />
      <path d="M15 10L33 8L31 18L26 26L23 36L12 35L11 25L19 19Z" fill="#dd6228" /><path d="M20 24L28 25L23 30L19 27Z" fill="#8a2f14" />
      <path d="M18 34L23 30L26 33L22 37Z" fill="#efc283" /><path d="M15 10L24 13L33 8L26 20L19 19Z" fill="#ef7d3a" />
    </g>
  </svg>
);

const UpArrow = () => (
  <svg width="16" height="17" viewBox="0 0 16 17"><path d="M8 0L16 9H12V16H4V9H0Z" fill="#fff" /></svg>
);

const Braces = () => (
  <svg width="26" height="16" viewBox="0 0 26 16" fill="none" stroke="#3e3e3e" strokeWidth="1.800"><path d="M5 1Q2.500 1 3 4T1 8Q3.500 8.500 3 12T5 15M21 1Q23.500 1 23 4T25 8Q22.500 8.500 23 12T21 15M8 4.500H18M8 8H18M8 11.500H18" /></svg>
);

/* ---------- data ---------- */

const menus = [
  ["Chrome", 145, 0.18, 700], ["File", 82, 0.14], ["Edit", 88.5, 0.08], ["View", 98.5, -0.9], ["History", 130.5, -0.17],
  ["Bookmarks", 180, -0.48], ["People", 126.5, -0.15], ["Tab", 84, -1.3], ["Window", 138, -0.87], ["Help", 62, 0.03],
];

const bookmarks = [
  ["Gmail", 142, -0.43, <Gmail />], ["YouTube", 170, -1.5, <YouTube />], ["Moodle", 163, -0.59, <Moodle />],
  ["Machine Learning", 269, -0.78, <Udemy />], ["Siddharth Singha R...", 308, -0.59, <RedS />],
  ["Remember JS", 232, -0.68, <Tree />, "#84cef0"], ["ML Intro", 170, -0.59, "S", "#078bf5"],
  ["Docs", 135, -0.31, <DocSearch />], ["ImageField", 200, -0.49, <YouTube />], ["Jinja with JS", 213, -0.81, <StackOverflow />],
  ["Py3", 122, -0.2, <Snake />], ["NBA Scores - Bask...", 290, -0.69, <Rabbit />, "#39355f"],
];

const dockApps = [
  { icon: <Finder />, running: true }, { icon: <Siri /> }, { icon: <Launchpad /> }, { icon: <Safari /> },
  { icon: <ChromeIcon />, running: true }, { icon: <Notes /> }, { icon: <Reminders /> },
  { icon: <Messages />, badge: "2", left: 63 }, { icon: <FaceTime /> }, { icon: <AppStore /> },
  { icon: <Preferences />, badge: "1", left: 63 }, { icon: <Terminal />, running: true }, { icon: <VSCode />, running: true },
  { icon: <Anaconda /> }, { icon: <RStudio /> }, { icon: <Postman /> }, { icon: <VLC /> }, { icon: <Spotify /> },
];

const dockDocs = [
  { icon: <ScriptEditor />, running: true }, { icon: <Music />, running: true },
  { icon: <Mail />, running: true, badge: "7,901", left: 40, track: -1 }, { icon: <Pages />, running: true },
];

const octagon = "polygon(30% 0, 70% 0, 100% 30%, 100% 70%, 70% 100%, 30% 100%, 0 70%, 0 30%)";

const DockItem = ({ icon, running, badge, left, track }) => (
  <DockSlot>
    {icon}
    {running && <RunningDot />}
    {badge && <DockBadge $left={left} $track={track}>{badge}</DockBadge>}
  </DockSlot>
);

const TextField = ({ label, placeholder }) => (
  <Field>
    <Label>{label}</Label>
    <TextInput placeholder={placeholder} />
  </Field>
);

export default function App() {
  return (
    <Desktop>
      <GlobalStyle />
      <MenuBar>
        <MenuGlyph $width={69.5}><FaApple size={34} /></MenuGlyph>
        {menus.map(([name, width, track, weight]) => (
          <MenuItem key={name} $width={width} $track={track} $weight={weight}>{name}</MenuItem>
        ))}
        <MenuSpacer />
        <MenuGlyph $width={49}><Bluetooth /></MenuGlyph>
        <MenuGlyph $width={64}><Wifi /></MenuGlyph>
        <MenuItem $width={70} $size={24}>100%</MenuItem>
        <MenuGlyph $width={84.5}><Battery /></MenuGlyph>
        <MenuItem $width={205.5} $track={-0.25}>Mon 5:52 AM</MenuItem>
        <MenuItem $width={316} $track={-0.12} $weight={500}>Siddharth Singha Roy</MenuItem>
        <MenuGlyph $width={64}><Search /></MenuGlyph>
        <MenuGlyph $width={56}><SiriSmall /></MenuGlyph>
        <MenuGlyph $width={36}><ListGlyph /></MenuGlyph>
      </MenuBar>

      <BrowserWindow>
        <Chrome>
          <TabStrip>
            <TrafficLights>
              <Light $color="#ff5b52" /><Light $color="#e6c03f" /><Light $color="#52c440" />
            </TrafficLights>
            <Tab $active $width={480} $pad="0 23px 0 26px">
              <Globe /><TabTitle $gap={18} $track={-0.38}>Registration</TabTitle><Close />
            </Tab>
            <Tab $width={476} $pad="0 21px 0 22px">
              <W3 /><TabTitle $gap={16} $track={-0.7}>CSS Selectors Reference</TabTitle><Close />
            </Tab>
            <TabDivider />
            <NewTab><Plus /></NewTab>
          </TabStrip>
          <Toolbar>
            <NavButton $dim><MdArrowBack size={39} /></NavButton>
            <NavButton $dim><MdArrowForward size={39} /></NavButton>
            <NavButton><MdRefresh size={40} /></NavButton>
            <Omnibox>
              <MdInfoOutline size={32} />
              <OmniText $width={58} $gap={14} $track={-0.36}>File</OmniText>
              <Rule />
              <OmniText $grow $gap={18} $track={-0.85}>
                /Users/sid/Documents/Programming/Web%20Dev/Assignment%201/Registration/registration.html
              </OmniText>
              <MdStarBorder size={34} color="#c4c5c7" />
            </Omnibox>
            <Extensions>
              <ExtBadge $bg="#252525"><FaReact size={30} /></ExtBadge>
              <ExtBadge><Braces /></ExtBadge>
              <ExtBadge $bg="linear-gradient(200deg, #00c79d, #00a9cc)" $radius="50%" $font={`200 23px/30px ${ui}`}>m</ExtBadge>
              <ExtBadge $bg="#d0040a" $clip={octagon} $font={`700 15px/32px "Open Sans", sans-serif`} $track={-0.6}>ABP</ExtBadge>
            </Extensions>
            <Rule $margin="0 22px 0 28px" />
            <Fox />
            <UpdateBadge $bg="#80cb9a" $radius="50%"><UpArrow /></UpdateBadge>
          </Toolbar>
          <BookmarksBar>
            {bookmarks.map(([name, width, track, icon, bg]) => (
              <Bookmark key={name} $width={width} $track={track}>
                <IconTile $bg={bg}>{icon}</IconTile>{name}
              </Bookmark>
            ))}
          </BookmarksBar>
        </Chrome>

        <Page>
          <Title>Travel Reservation Form</Title>
          <Note>* denotes mandatory</Note>
          <TextField label="Full Name*:" placeholder="FirstName LastName" />
          <TextField label="Email Address*:" placeholder="Email Address" />
          <Field $height={132}>
            <Label>Select Tour Package*:</Label>
            <Select>
              <SelectValue>Goa</SelectValue>
              <SelectArrows>
                <svg width="14" height="22" viewBox="0 0 14 22" fill="none" stroke="#fff" strokeWidth="2.600" strokeLinecap="round" strokeLinejoin="round"><path d="M1.500 7.500L7 1.500L12.500 7.500M1.500 14.500L7 20.500L12.500 14.500" /></svg>
              </SelectArrows>
            </Select>
          </Field>
          <Field>
            <Label>Arrival Date*:</Label>
            <DateInput>
              <DatePart>dd</DatePart><DateSlash>/</DateSlash><DatePart>mm</DatePart><DateSlash>/</DateSlash><DatePart>yyyy</DatePart>
            </DateInput>
          </Field>
          <TextField label="Number of persons*:" placeholder="Number of persons" />
          <Label>What Would you like to avail*:</Label>
          <CheckList>
            {["Boarding", "Fooding", "Sight-Seeing"].map((name) => (
              <CheckRow key={name}><CheckBox /><CheckText>{name}</CheckText></CheckRow>
            ))}
          </CheckList>
          <DiscountField>
            <TextField label="Discount Coupon Code:" placeholder="Discount Coupon Code" />
          </DiscountField>
        </Page>
      </BrowserWindow>

      <DockArea>
        <Dock>
          {dockApps.map((app, i) => <DockItem key={i} {...app} />)}
          <DockDivider $left={23} $right={22} />
          {dockDocs.map((app, i) => <DockItem key={i} {...app} />)}
          <DockDivider $left={22} $right={20} />
          <DockItem icon={<Trash />} />
        </Dock>
      </DockArea>
    </Desktop>
  );
}
